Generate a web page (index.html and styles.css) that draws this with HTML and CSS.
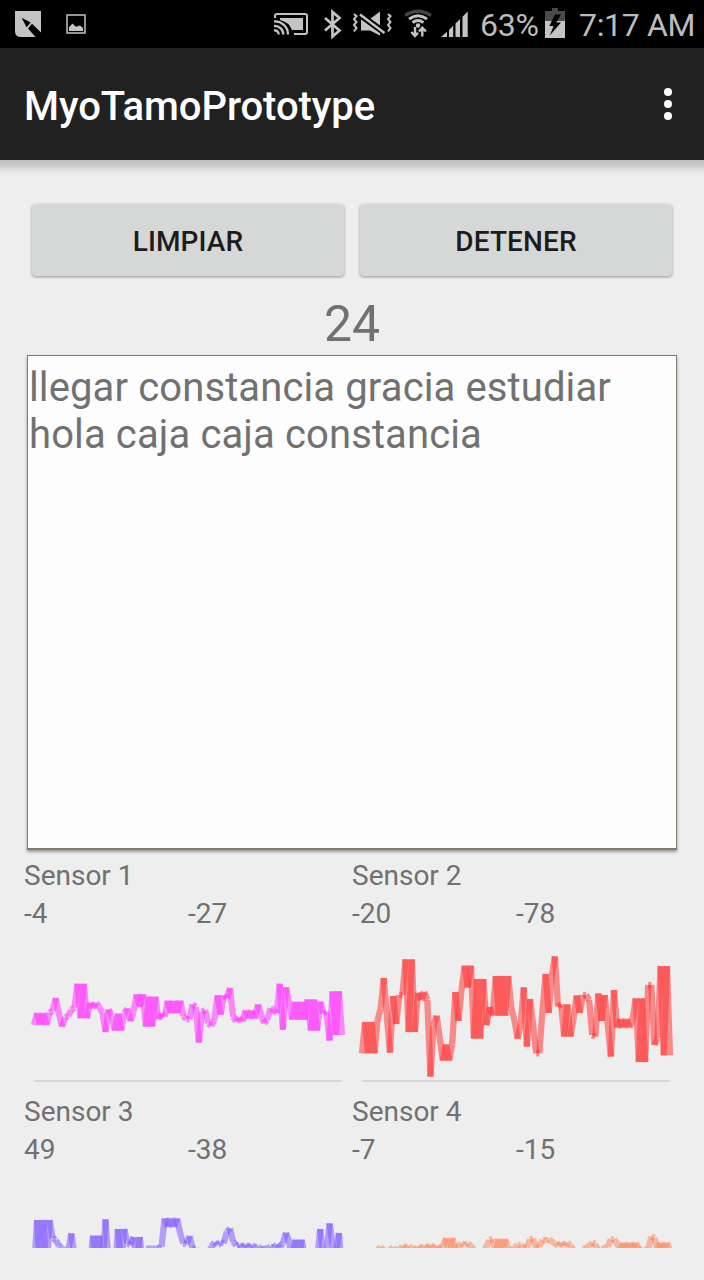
FILE: index.html
```html
<!DOCTYPE html>
<html lang="es">
<head>
<meta charset="utf-8">
<title>MyoTamoPrototype</title>
<link rel="stylesheet" href="styles.css">
</head>
<body>
<div class="status">
  <svg class="notifications" width="80" height="48" viewBox="10 0 80 48">
    <path fill="#c4c4c4" d="M15 11H41V37H21Q15 37 15 31Z"/>
    <path fill="#000" d="M21.6 17.8L30.7 22.6L26.6 27.2ZM32 23.8L41 32.5V37H35.5L28 28.4Z"/>
    <rect x="67" y="15" width="18" height="18" fill="none" stroke="#c4c4c4" stroke-width="1.5"/>
    <path fill="#c4c4c4" d="M69 31V27.3L72.5 23.4L75.8 26.7L80 25.5L83 28V31Z"/>
  </svg>
  <div class="system">
    <svg width="198" height="48" viewBox="272 0 198 48" fill="none" stroke="#c4c4c4">
      <path stroke-width="2" d="M275 18V16Q275 14 277 14H305Q307 14 307 16V32Q307 34 305 34H294"/>
      <path fill="#c4c4c4" stroke="none" d="M280 18H303V30H292Q289 22 280 20Z"/>
      <path stroke-width="2.3" d="M274 21.5A13 13 0 0 1 288 34.5M274 26A8.5 8.5 0 0 1 283.3 34.5M274 30.5A4 4 0 0 1 278.7 34.5"/>
      <path stroke-width="2.7" d="M325 18L339.5 30.5L332.5 36.5V12L339.5 18L325 30.5"/>
      <path fill="#c4c4c4" stroke="none" d="M361 19H370L380 11.5V35.5L370 30.5H361Z"/>
      <path stroke="#000" stroke-width="6.5" d="M359 14L385 33"/>
      <path stroke-width="2.5" d="M360 14.5L384.5 33"/>
      <path stroke-width="2" d="M354 14L356.5 16.2L354 19L356.5 22L354 25L356.5 28L354 31.5M388 14L390.5 16.2L388 19L390.5 22L388 25L390.5 28L388 31.5"/>
      <path stroke="#454545" stroke-width="3.2" d="M405 15.5Q418 7 431 15.5"/>
      <path stroke-width="2.9" d="M409 19Q418 12.5 427 19M412.5 22.7Q418 18.5 423.5 22.7"/>
      <circle cx="418" cy="25.5" r="2.2" fill="#c4c4c4" stroke="none"/>
      <path stroke-width="2.4" d="M415 27V35.5M411.3 32L415 36L418 32.8M422.3 36.5V28.5M419 31.5L422.3 27.8L426 31.5"/>
      <path fill="#c4c4c4" stroke="none" d="M441 37L447 31.7V37ZM449 30L453.2 25.8V37H449ZM455.5 23.5L460 19V37H455.5ZM462.5 16.8L467.7 11.5V37H462.5Z"/>
    </svg>
    <span class="level">63%</span>
    <svg class="battery" width="20" height="48" viewBox="545 0 20 48">
      <path fill="#4b4b4b" d="M545 11H552V8H558V11H565V21H545Z"/>
      <path fill="#c4c4c4" d="M545 21H565V38H545Z"/>
      <path fill="#000" d="M555 14.5L549.3 26H553.6L549.8 35.5L561 22.5H556.3L561 14.5Z"/>
    </svg>
    <span class="clock">7:17 AM</span>
  </div>
</div>
<header class="bar">
  <h1>MyoTamoPrototype</h1>
  <svg width="8" height="32" viewBox="0 0 8 32" fill="#fff"><circle cx="4" cy="4" r="4"/><circle cx="4" cy="16" r="4"/><circle cx="4" cy="28" r="4"/></svg>
</header>
<main class="content">
  <div class="buttons"><button class="btn">LIMPIAR</button><button class="btn">DETENER</button></div>
  <div class="count">24</div>
  <div class="words">llegar constancia gracia estudiar<br>hola caja caja constancia</div>
  <div class="sensors">
    <section class="sensor"><div>Sensor 1</div><div class="values"><span>-4</span><span>-27</span></div><svg class="chart" id="s1"></svg></section>
    <section class="sensor"><div>Sensor 2</div><div class="values"><span>-20</span><span>-78</span></div><svg class="chart" id="s2"></svg></section>
    <section class="sensor"><div>Sensor 3</div><div class="values"><span>49</span><span>-38</span></div><svg class="chart" id="s3"></svg></section>
    <section class="sensor"><div>Sensor 4</div><div class="values"><span>-7</span><span>-15</span></div><svg class="chart" id="s4"></svg></section>
  </div>
</main>
<script src="charts.js"></script>
</body>
</html>
```
FILE: styles.css
```css
* { box-sizing: border-box; }
body { margin: 0; width: 704px; height: 1280px; overflow: hidden; background: #eee; font-family: Roboto, sans-serif; color: #717171; }
svg { display: block; }
.status { height: 48px; background: #000; display: flex; justify-content: space-between; padding: 0 10px; color: #bdbdbd; font-size: 32px; line-height: 50px; white-space: nowrap; }
.system { display: flex; }
.level { width: 65px; margin-left: 10px; letter-spacing: -.2px; }
.clock { width: 115px; margin-left: 14px; letter-spacing: -.35px; }
.bar { height: 112px; background: #212121; display: flex; align-items: center; justify-content: space-between; padding: 0 32px 0 24px; }
.bar h1 { margin: 0; padding-top: 4px; font-size: 40px; font-weight: 500; letter-spacing: -.06px; color: #fff; }
.content { height: 1088px; padding: 32px 24px 0; overflow: hidden; background: linear-gradient(#bebebe, #c8c8c8 5px, #dfdfdf 10px, #eaeaea 13px, #eee 17px); }
.buttons { display: flex; gap: 16px; padding: 12px 8px 0; }
.btn { flex: 1; height: 72px; border: 0; border-radius: 4px; background: #d6d8d7; box-shadow: 0 1px 3px rgba(0,0,0,.4); font: 500 28px Roboto, sans-serif; letter-spacing: .1px; color: #1c1c1c; padding: 2px 0 0; }
.count { margin-top: 13px; height: 66px; text-align: center; font-size: 50px; line-height: 70px; }
.words { margin: 0 3px; height: 495px; border: 1px solid #857b6d; border-width: 1px 1px 2px; background: #fdfdfd; box-shadow: 0 2px 3px rgba(0,0,0,.35); padding: 8px 0 0 1px; font-size: 40px; line-height: 47px; letter-spacing: .12px; white-space: nowrap; }
.sensors { margin-top: 6px; height: 392px; overflow: hidden; display: grid; grid-template-columns: 1fr 1fr; grid-auto-rows: 236px; font-size: 28px; line-height: 38px; }
.sensor { padding-top: 1px; }
.values { display: grid; grid-template-columns: 1fr 1fr; }
.chart { width: 328px; height: 160px; margin-top: -1px; }
```
FILE: charts.js
```js
// Samples are vertical positions in thirds of a pixel, measured down from `top`.
const charts = [
  { id: 's1', color: '#ff33ff', top: 38, data: [
    165,129,165,129,165,129,122,84,130,170,142,138,120,113,41,145,41,145,98,115,
    98,112,127,186,118,140,182,131,182,131,115,154,125,73,110,73,170,80,170,80,
    148,130,140,92,130,92,130,92,138,148,148,103,110,218,125,120,160,168,150,76,
    134,76,85,54,140,155,142,155,121,146,121,146,103,135,160,150,115,120,130,41,
    179,52,100,149,95,149,95,149,88,182,88,182,95,130,125,212,64,195,64,195] },
  { id: 's2', color: '#ff3333', top: 13, data: [
    325,231,325,231,325,225,190,99,215,323,153,237,150,150,43,261,43,261,143,165,
    141,165,395,240,212,280,347,298,347,298,141,228,135,62,128,62,281,102,281,102,
    241,186,212,93,212,93,212,93,190,225,281,240,127,305,162,240,325,325,200,87,
    204,95,34,185,178,275,178,275,220,151,204,150,150,165,270,275,145,228,150,240,
    335,135,248,222,248,222,248,222,160,351,160,351,120,120,300,280,63,331,63,331] },
  { id: 's3', color: '#8058ff', top: 37, data: [
    200,45,200,45,200,45,100,105,122,130,140,140,85,150,180,180,180,180,180,92,
    180,92,180,43,180,200,200,72,180,72,115,120,96,180,96,180,131,131,131,131,
    131,125,40,66,40,66,40,85,115,118,93,131,131,150,150,150,150,125,112,120,
    112,115,80,70,110,122,118,128,118,128,120,128,125,132,133,130,125,128,118,128,
    115,83,110,170,104,170,104,150,180,180,180,170,72,150,150,55,120,150,84,200] },
  { id: 's4', color: '#ff875c', top: 52, data: [
    110,110,110,110,110,90,81,90,98,90,82,95,90,78,85,78,85,92,80,85,
    78,85,75,85,78,90,80,54,110,54,85,80,70,75,70,78,90,110,110,95,
    80,60,57,100,57,100,57,88,95,82,75,75,85,82,58,56,85,80,60,62,
    58,65,70,78,68,78,68,75,90,110,110,87,85,78,68,72,96,87,85,80,
    58,58,70,90,68,90,68,90,68,88,88,94,88,50,54,90,68,90,68,90] }
];
const NS = 'http://www.w3.org/2000/svg';
function line(svg, x1, y1, x2, y2, color, width, opacity) {
  const el = document.createElementNS(NS, 'line');
  const attrs = { x1, y1, x2, y2, stroke: color, 'stroke-width': width, 'stroke-opacity': opacity };
  for (const key in attrs) el.setAttribute(key, attrs[key]);
  svg.appendChild(el);
}
for (const { id, color, top, data } of charts) {
  const svg = document.getElementById(id);
  const step = 308 / (data.length - 1);
  for (let i = 1; i < data.length; i++) {
    line(svg, 10 + (i - 1) * step, top + data[i - 1] / 3, 10 + i * step, top + data[i] / 3, color, 6.3, 0.54);
  }
  line(svg, 10, 149, 318, 149, '#d5d5d5', 2, 1);
}
```
